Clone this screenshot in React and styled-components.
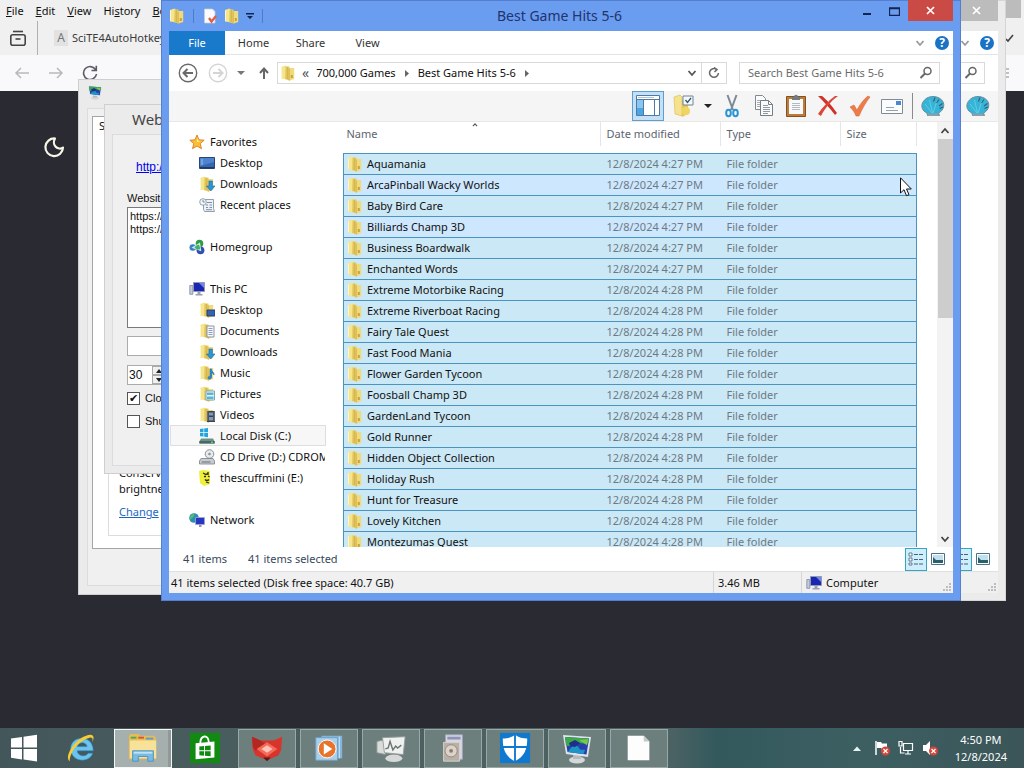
import React from 'react';
import styled, { createGlobalStyle, css } from 'styled-components';

const GlobalStyle = createGlobalStyle`
  * {
    box-sizing: border-box;
  }

  body {
    margin: 0;
    overflow: hidden;
    background: #2a2a32;
    color: #111;
    font-family: "Noto Sans", "Open Sans", sans-serif;
    font-size: 11px;
    line-height: 16px;
  }

  button {
    display: flex;
    align-items: center;
    justify-content: center;
    padding: 0;
    border: 0;
    background: none;
    color: inherit;
    font: inherit;
  }

  input, textarea {
    font: inherit;
    color: inherit;
  }

  svg {
    display: block;
    flex: none;
  }

  ul {
    margin: 0;
    padding: 0;
    list-style: none;
  }
`;

/* ---------- icons ---------- */

const FolderShape = () => (
  <>
    <path d="M1 2l4.500-1.500L7.500 2v12.500L1 13.500z" fill="#f5e58e" />
    <path d="M5.500 1.500h4v14L5 14z" fill="#e6ca62" />
    <path d="M9 3h5.200v11L9 15.700z" fill="#efda7c" />
    <path d="M7.300 2v12M9.200 3.500v12" stroke="#cda944" strokeWidth=".8" />
    <path d="M1.500 2.500v10.500" stroke="#fdf6c6" />
    <path d="M10.800 10h2v3h-2z" fill="#cf9f38" />
  </>
);

const overlays = {
  desktop: <path d="M8 8h8v6H8z" fill="#3763a8" stroke="#26416f" />,
  documents: (
    <>
      <path d="M8 3h7v11H8z" fill="#f6f8fc" stroke="#8b95a8" />
      <path d="M9.500 5.500h4M9.500 7.500h4M9.500 9.500h4M9.500 11.500h4" stroke="#7485b5" strokeWidth=".8" />
    </>
  ),
  downloads: <path d="M10 5h3.400v5H16l-4.300 5L7.500 10H10z" fill="#2b95d6" stroke="#1a6ba8" strokeWidth=".6" />,
  music: <path d="M11 4l1.500 0c0 3 3 3 2.500 6-.5-1.500-1.500-2-2.500-2v4.500c-.5 2.500-4 2-3.500 0 .3-1 1.200-1.300 2-1z" fill="#2a8cd0" stroke="#1c6fae" strokeWidth=".6" />,
  pictures: (
    <>
      <path d="M7 5h8.500v9H7z" fill="#e5f4fa" stroke="#79a9bd" />
      <path d="M8 6.500h6.500v2.500H8zM8 10.500h6.500V13H8z" fill="#5fb3cf" />
    </>
  ),
  videos: (
    <>
      <path d="M8 4h8v11H8z" fill="#39424f" />
      <path d="M10 5.500h4v3h-4zM10 10h4v3.500h-4z" fill="#7f9cc0" />
      <path d="M8.800 4.500v10M15.200 4.500v10" stroke="#e6e6e6" strokeWidth=".8" strokeDasharray="1 1" />
    </>
  ),
};

const FolderIcon = ({ kind }) => (
  <svg width="16" height="16" viewBox="0 0 16 16" aria-hidden="true">
    <FolderShape />
    {overlays[kind]}
  </svg>
);

const StarIcon = () => (
  <svg width="16" height="16" viewBox="0 0 16 16" aria-hidden="true">
    <path d="M8 1l2 4.800 5.200.4-4 3.400 1.300 5.100L8 12l-4.500 2.700 1.300-5.100-4-3.400L6 5.800z" fill="#fbc02d" stroke="#dd7a2a" strokeWidth=".9" />
    <path d="M8 3.500l1.200 3.200 3 .3-4 1z" fill="#fff3b8" />
  </svg>
);

const ScreenIcon = () => (
  <svg width="16" height="16" viewBox="0 0 16 16" aria-hidden="true">
    <path d="M.5 2.500h15v11H.5z" fill="#3568b4" stroke="#2a4676" />
    <path d="M1 3h14v4L1 11z" fill="#4f82cf" />
    <path d="M1 12h14v1.500H1z" fill="#22385e" />
    <path d="M2 5h2M2 7h2M2 9h2" stroke="#9fc0ee" />
  </svg>
);

const RecentIcon = () => (
  <svg width="16" height="16" viewBox="0 0 16 16" aria-hidden="true">
    <path d="M4.500 2.500h10v9l1 3h-10l-1-2z" fill="#eef1f5" stroke="#8794a3" strokeWidth=".9" />
    <path d="M8 5.500h5M7 8h2M10.500 8h2.500M7 10.500h2M10.500 10.500H13M7 12.700h6" stroke="#7f93a8" />
    <circle cx="4" cy="5" r="3.300" fill="#f3f6f9" stroke="#8a99a8" strokeWidth=".9" />
    <path d="M4 3v2h1.700" fill="none" stroke="#5d6f82" strokeWidth=".8" />
  </svg>
);

const HomegroupIcon = () => (
  <svg width="16" height="16" viewBox="0 0 16 16" aria-hidden="true">
    <circle cx="3.800" cy="8.500" r="3.300" fill="#3d7fc8" />
    <circle cx="10.500" cy="4.500" r="3.800" fill="#2f9b45" />
    <circle cx="11.500" cy="11.300" r="3.900" fill="#314fae" />
    <path d="M4 8.500l6.500-4 1 6.800z" fill="none" stroke="#d3eede" strokeWidth="1.300" />
    <circle cx="8.500" cy="8.500" r="2.200" fill="#3fb36a" />
  </svg>
);

const PcIcon = () => (
  <svg width="16" height="16" viewBox="0 0 16 16" aria-hidden="true">
    <path d="M.8 4.500h3v8.800h-3z" fill="#c4cbd9" stroke="#7f88a0" strokeWidth=".8" />
    <path d="M4.500 1.500h11v9h-11z" fill="#1a25b0" stroke="#9298b8" />
    <path d="M10 2h5v5z" fill="#6f86e8" />
    <path d="M8.500 11h3v2h2v1.500h-7V13h2z" fill="#9aa0b4" />
  </svg>
);

const DiskIcon = () => (
  <svg width="16" height="16" viewBox="0 0 16 16" aria-hidden="true">
    <path d="M1 1l3.500-.4v3.600H1zM5.200.5 9 0v4.200H5.200zM1 5h3.500v3.600L1 8.200zM5.200 5H9v4.200l-3.800-.5z" fill="#22a5de" />
    <path d="M2 10.500h12l1.600 3v2H.4v-2z" fill="#6d9187" />
    <path d="M.4 13h15.200v2.500H.4z" fill="#466a66" />
    <path d="M12 14.200h2" stroke="#7ef07a" />
  </svg>
);

const CdIcon = () => (
  <svg width="16" height="16" viewBox="0 0 16 16" aria-hidden="true">
    <circle cx="10.500" cy="5" r="4.300" fill="#e7eaed" stroke="#8c9298" />
    <circle cx="10.500" cy="5" r="1.300" fill="#8c9298" />
    <path d="M2 9.500h12l1.500 2.500v3H.5v-3z" fill="#c8ccd0" stroke="#7a8087" strokeWidth=".8" />
    <path d="M2.500 13h9" stroke="#666c73" />
  </svg>
);

const FaceIcon = () => (
  <svg width="16" height="16" viewBox="0 0 16 16" aria-hidden="true">
    <path d="M0 1l4-1 7 1v13l-6 2-4-3z" fill="#eef03c" />
    <path d="M4 3l3 1.500L9.500 3M5 6.500h2M9 6l1.500 1M6 9.500c2 2 3 1 4 0M9 2v3M7 12l3 1" fill="none" stroke="#2b2b12" strokeWidth="1.300" />
  </svg>
);

const NetworkIcon = () => (
  <svg width="16" height="16" viewBox="0 0 16 16" aria-hidden="true">
    <circle cx="5" cy="6" r="4.800" fill="#2b8fb3" />
    <path d="M2 3c3-2 4-1 3 1S2 6 2 8c-1.500-1.500-1.500-3.500 0-5zM6 8l3-2v4z" fill="#54bd6a" />
    <path d="M6.500 5.500h9v7h-9z" fill="#2735c4" stroke="#a0a8c8" strokeWidth=".8" />
    <path d="M10 13h2.500v2H10z" fill="#8d95ad" />
  </svg>
);

const CheckPageIcon = () => (
  <svg width="16" height="16" viewBox="0 0 16 16" aria-hidden="true">
    <path d="M2.500 1h8L13 3.500V15H2.500z" fill="#fbfbff" stroke="#c7cde0" strokeWidth=".7" />
    <path d="M7 10l2.500 3.500L14 8" fill="none" stroke="#e0603f" strokeWidth="2.300" />
  </svg>
);

const MonitorIcon = ({ size = 16 }) => (
  <svg width={size} height={size} viewBox="0 0 32 32" aria-hidden="true">
    <ellipse cx="16" cy="28" rx="8" ry="3.500" fill="#d4d8da" />
    <path d="M12 22h8v5h-8z" fill="#b5babd" />
    <path d="M2 3l28 2-3 20L5 22z" fill="#dfe4ec" />
    <path d="M4 5l24 1.600-2.500 16L6.500 20z" fill="#2a3fae" />
    <path d="M4 5l24 1.600-.8 5C20 12 17 9 12 12s-5 2-7.200 1z" fill="#3da848" />
    <path d="M9 17c3-5 8-4 9-1s5 1 6 2l-1.500 4L7 20z" fill="#1b95c4" />
    <path d="M8 11l6-3 5 3-5 4-5-1z" fill="#1d2f86" />
    <path d="M18 8l9-.7-1 6z" fill="#78c94c" />
  </svg>
);

const SearchIcon = () => (
  <svg width="14" height="14" viewBox="0 0 14 14" aria-hidden="true">
    <circle cx="8.500" cy="5" r="3.500" fill="none" stroke="#666" strokeWidth="1.500" />
    <path d="M6 7.500l-4.500 4.500" stroke="#666" strokeWidth="2" />
  </svg>
);

const Chevron = ({ color = '#555', up, size = 10 }) => (
  <svg width={size} height={size} viewBox="0 0 10 10" aria-hidden="true">
    <path d={up ? 'M1.500 7L5 3l3.500 4' : 'M1.500 3L5 7l3.500-4'} fill="none" stroke={color} strokeWidth="1.800" />
  </svg>
);

const Caret = ({ color = '#222' }) => (
  <svg width="8" height="4" viewBox="0 0 8 4" aria-hidden="true">
    <path d="M0 0h8L4 4z" fill={color} />
  </svg>
);

const RightArrow = () => (
  <svg width="4" height="7" viewBox="0 0 4 7" aria-hidden="true">
    <path d="M0 0l4 3.500L0 7z" fill="#666" />
  </svg>
);

const CircleArrow = ({ color, flip }) => (
  <svg width="20" height="20" viewBox="0 0 20 20" aria-hidden="true">
    <circle cx="10" cy="10" r="8.700" fill="none" stroke={color} strokeWidth="1.400" />
    <path d={flip ? 'M5 10h9M10.500 6l4 4-4 4' : 'M15 10H6M9.500 6l-4 4 4 4'} fill="none" stroke={color} strokeWidth="2" />
  </svg>
);

const CloseGlyph = () => (
  <svg width="9" height="9" viewBox="0 0 9 9" aria-hidden="true">
    <path d="M1 1l7 7M8 1L1 8" stroke="#fff" strokeWidth="1.700" />
  </svg>
);

const ShellIcon = () => (
  <svg width="24" height="24" viewBox="0 0 24 24" aria-hidden="true">
    <path d="M6 19C1 17 0 12 1.500 9 3.500 4.500 8 2.500 12 2.500s9 2 10.500 6.500c1 4-1 8-5 10l1 2.500h-12z" fill="#35b4d8" stroke="#6a8c9c" />
    <path d="M11 19L4 10M11.500 19L8.500 6M12 19l4-12" stroke="#62cbe4" strokeWidth="1" />
    <path d="M14 3.500l-1.500 4M18 5.500L15.500 9M21.500 9.500L18 12M22 13l-3.500 1.500" stroke="#3c5f74" strokeWidth="1.200" />
    <path d="M7 19.500h10l1 2.500H6z" fill="#86a0ac" />
  </svg>
);

const PaneIcon = () => (
  <svg width="26" height="24" viewBox="0 0 26 24" aria-hidden="true">
    <path d="M1.500 1.500h23v20h-23z" fill="#fff" stroke="#4d7ba6" />
    <path d="M1.500 5.500h23" stroke="#4d7ba6" />
    <path d="M2 6h6v15H2z" fill="#8cc6f0" />
    <path d="M2 14h6v7H2z" fill="#4ca4e2" />
    <path d="M8.500 6v15M19.500 6v15" stroke="#4d7ba6" />
    <path d="M3 3.500h16" stroke="#a9c6df" />
  </svg>
);

const SelectIcon = () => (
  <svg width="24" height="24" viewBox="0 0 24 24" aria-hidden="true">
    <path d="M2 3l6-2 2 2v19l-7-2z" fill="#f6e28c" stroke="#d6b850" strokeWidth=".6" />
    <path d="M10 6h6v14l-6 3z" fill="#e8c65a" />
    <path d="M11 2h10v9H11z" fill="#f4f8fb" stroke="#6e8494" />
    <path d="M13.500 6l2 2.500L19 4" fill="none" stroke="#31526c" strokeWidth="1.300" />
    <circle cx="14" cy="17" r="4" fill="#efd564" />
  </svg>
);

const CutIcon = () => (
  <svg width="24" height="24" viewBox="0 0 24 24" aria-hidden="true">
    <path d="M7.500 1l5.500 15M16.500 1L11 16" stroke="#7c8a96" strokeWidth="2" />
    <ellipse cx="8.500" cy="19" rx="2.300" ry="3.300" fill="none" stroke="#2695d2" strokeWidth="2" />
    <ellipse cx="15.500" cy="19" rx="2.300" ry="3.300" fill="none" stroke="#2695d2" strokeWidth="2" />
  </svg>
);

const CopyIcon = () => (
  <svg width="24" height="24" viewBox="0 0 24 24" aria-hidden="true">
    <path d="M3.500 1.500h7l3 3v11h-10z" fill="#fafbfc" stroke="#84898e" />
    <path d="M5 6.500h5M5 8.500h4M5 10.500h4M5 12.500h4" stroke="#a5abb1" />
    <path d="M8.500 6.500h8l4 4v11h-12z" fill="#fafbfc" stroke="#777d83" />
    <path d="M16.500 6.500v4h4" fill="none" stroke="#777d83" />
    <path d="M11 11.500h5M11 13.500h7M11 15.500h7M11 17.500h7M11 19.500h5" stroke="#9299a0" />
  </svg>
);

const PasteIcon = () => (
  <svg width="24" height="24" viewBox="0 0 24 24" aria-hidden="true">
    <path d="M2.500 2.500h19v20h-19z" fill="#bd7c3c" stroke="#84511f" />
    <path d="M5 5h14v15H5z" fill="#f8f9fa" />
    <path d="M8 9.500h8M8 11.500h8M8 13.500h8M8 15.500h8" stroke="#b1b9c1" />
    <path d="M8 3h2c0-3 4-3 4 0h2v3H8z" fill="#717b82" />
  </svg>
);

const DeleteIcon = () => (
  <svg width="24" height="24" viewBox="0 0 24 24" aria-hidden="true">
    <path d="M2 2l4 0c4 3 10 10 15 17l-2 2C14 14 8 8 2 2z" fill="#cf3327" />
    <path d="M22 2l-3 0C12 7 6 14 2 20l3 2C9 14 15 7 22 2z" fill="#dd4437" />
  </svg>
);

const AcceptIcon = () => (
  <svg width="24" height="24" viewBox="0 0 24 24" aria-hidden="true">
    <path d="M2 13l4-2 3 5c3-6 7-11 11-14l2 1C18 8 14 15 11 22H8C7 19 5 16 2 13z" fill="#ee7c4b" stroke="#d96a3a" strokeWidth=".6" />
  </svg>
);

const PropertiesIcon = () => (
  <svg width="24" height="24" viewBox="0 0 24 24" aria-hidden="true">
    <path d="M1.500 5.500h21v14h-21z" fill="#fbfcfd" stroke="#818b94" />
    <path d="M16 7h5v4h-5z" fill="#4a86d2" />
    <path d="M6 13.500h8M6 16.500h12" stroke="#98a0a8" />
  </svg>
);

/* ---------- browser behind everything ---------- */

const Desktop = styled.div`
  position: relative;
  display: flex;
  flex-direction: column;
  height: 100vh;
  overflow: hidden;
`;

const Browser = styled.section`
  display: flex;
  flex: 1;
  flex-direction: column;
  min-height: 0;
`;

const MenuBar = styled.nav`
  display: flex;
  align-items: center;
  gap: 12px;
  height: 21px;
  padding-left: 6px;
  background: #f0f0f0;
`;

const MenuItem = styled.button`
  white-space: pre;
`;

const TabStrip = styled.div`
  display: flex;
  align-items: center;
  height: 34px;
  padding-left: 9px;
  background: #f0f0f0;
`;

const BrowserTab = styled.button`
  gap: 4px;
  height: 100%;
  margin-left: 10px;
  padding-left: 16px;
  border-left: 1px solid #b0b0b0;
  color: #3a3a3a;
`;

const TabBadge = styled.span`
  width: 14px;
  height: 16px;
  background: #e2e2e2;
  color: #777;
  font-size: 12px;
`;

const BrowserNav = styled.div`
  display: flex;
  align-items: center;
  gap: 18px;
  height: 36px;
  padding-left: 14px;
  background: #f9f9fb;
`;

const Page = styled.main`
  flex: 1;
  padding: 45px 43px;
  background: #2a2a32;
`;

const BrowserEdge = styled.div`
  position: absolute;
  top: 0;
  right: 0;
  display: flex;
  flex-direction: column;
  gap: 14px;
  width: 18px;
  padding-right: 3px;
`;

const EdgeBlock = styled.div`
  height: 18px;
  background: #bcbcbc;
`;

const Underlined = ({ text, at = 0 }) => (
  <span>
    {text.slice(0, at)}
    <u>{text[at]}</u>
    {text.slice(at + 1)}
  </span>
);

const BrowserWindow = () => (
  <Browser>
    <MenuBar aria-label="Browser menu">
      <MenuItem><Underlined text="File" /></MenuItem>
      <MenuItem><Underlined text="Edit" /></MenuItem>
      <MenuItem><Underlined text="View" /></MenuItem>
      <MenuItem><Underlined text="History" at={2} /></MenuItem>
      <MenuItem><Underlined text="Bookmarks" /></MenuItem>
    </MenuBar>
    <TabStrip>
      <button aria-label="Recent browsing">
        <svg width="18" height="18" viewBox="0 0 18 18">
          <path d="M4 2.500h10" stroke="#444" strokeWidth="1.600" />
          <rect x="1.800" y="5.800" width="14.400" height="10.400" rx="2" fill="none" stroke="#444" strokeWidth="1.600" />
          <path d="M6.500 10h5" stroke="#444" strokeWidth="1.600" />
        </svg>
      </button>
      <BrowserTab>
        <TabBadge>A</TabBadge>
        SciTE4AutoHotkey
      </BrowserTab>
    </TabStrip>
    <BrowserNav>
      <button aria-label="Back">
        <svg width="16" height="14" viewBox="0 0 16 14">
          <path d="M15 7H2M7 2L2 7l5 5" fill="none" stroke="#b9b9bd" strokeWidth="1.500" />
        </svg>
      </button>
      <button aria-label="Forward">
        <svg width="16" height="14" viewBox="0 0 16 14">
          <path d="M1 7h13M9 2l5 5-5 5" fill="none" stroke="#b9b9bd" strokeWidth="1.500" />
        </svg>
      </button>
      <button aria-label="Reload">
        <svg width="16" height="16" viewBox="0 0 16 16">
          <path d="M13.500 4.500A6.500 6.500 0 1 0 14.500 9M14.300.8v4.700H9.500" fill="none" stroke="#5b5b66" strokeWidth="1.600" />
        </svg>
      </button>
    </BrowserNav>
    <Page>
      <svg width="22" height="22" viewBox="0 0 22 22" aria-hidden="true">
        <path d="M12 2.500A8.800 8.800 0 1 0 20 11.500C18 13.500 14 12.500 12.500 10.500 10.500 8.500 10.500 5 12 2.500z" fill="none" stroke="#f7f7e8" strokeWidth="2.200" strokeLinejoin="round" />
      </svg>
    </Page>
    <BrowserEdge>
      <EdgeBlock />
      <svg width="15" height="48" viewBox="0 0 15 48" aria-hidden="true">
        <path d="M0 7l2 2 5-6" fill="none" stroke="#444" strokeWidth="1.600" />
        <path d="M0 37h3M0 41h3M0 45h3" stroke="#888" />
      </svg>
    </BrowserEdge>
  </Browser>
);

/* ---------- power settings window ---------- */

const PowerWindow = styled.section`
  position: absolute;
  top: 79px;
  right: 200px;
  bottom: 173px;
  left: 78px;
  display: flex;
  flex-direction: column;
  padding: 4px 6px 8px 8px;
  border: 1px solid #cfcfcf;
  background: #ebebeb;
`;

const PowerBody = styled.div`
  display: flex;
  flex: 1;
  margin-top: 8px;
  padding: 7px 6px 36px 4px;
  border: 1px solid #dcdcdc;
  background: #f0f0f0;
`;

const PowerPage = styled.div`
  display: flex;
  flex: 1;
  flex-direction: column;
  padding: 1px 6px 12px;
  border: 1px solid #a5a5a5;
  background: #fff;
`;

const PowerGroup = styled.div`
  display: flex;
  flex: 1;
  flex-direction: column;
  justify-content: flex-end;
  margin-left: 9px;
  padding: 0 10px 15px;
  border: 1px solid #dcdcdc;
  border-top: 0;
`;

const TextLink = styled.a`
  color: ${(p) => p.$color || '#1b67c1'};
`;

const PowerLink = styled(TextLink)`
  margin-top: 7px;
`;

const PowerOptions = () => (
  <PowerWindow>
    <MonitorIcon size={16} />
    <PowerBody>
      <PowerPage>
        <span>Set</span>
        <PowerGroup>
          <span>Conserve</span>
          <span>brightness</span>
          <PowerLink href="#power">Change</PowerLink>
        </PowerGroup>
      </PowerPage>
    </PowerBody>
  </PowerWindow>
);

/* ---------- website dialog ---------- */

const DialogWindow = styled.section`
  position: absolute;
  top: 104px;
  right: 300px;
  bottom: 294px;
  left: 104px;
  display: flex;
  flex-direction: column;
  padding: 0 7px 7px;
  border: 1px solid #cfcfcf;
  background: #ebebeb;
`;

const DialogTitle = styled.h2`
  margin: 0;
  padding-left: 20px;
  font-size: 15px;
  font-weight: 400;
  line-height: 29px;
  color: #444;
`;

const DialogBody = styled.form`
  display: flex;
  flex: 1;
  flex-direction: column;
  align-items: flex-start;
  padding: 26px 14px 0;
  border: 1px solid #dcdcdc;
  background: #f0f0f0;
  font-family: "Liberation Sans", Arial, sans-serif;
  font-size: 12px;
  line-height: 13px;
`;

const DialogLink = styled(TextLink)`
  margin-left: 9px;
`;

const FieldLabel = styled.label`
  margin: 18px 0 2px;
  font-size: 11px;
`;

const UrlBox = styled.textarea`
  width: 200px;
  height: 121px;
  padding: 2px;
  border: 1px solid #7a7a7a;
  background: #fff;
  font-size: 11px;
  resize: none;
`;

const PlainInput = styled.input`
  width: 200px;
  height: 20px;
  margin: 8px 0 9px;
  border: 1px solid #ababab;
  background: #fff;
`;

const SpinRow = styled.div`
  display: flex;
  height: 20px;
  border: 1px solid #ababab;
  background: #fff;
`;

const SpinInput = styled.input`
  width: 24px;
  padding: 0 1px;
  border: 0;
`;

const SpinButtons = styled.div`
  display: flex;
  flex-direction: column;
  width: 14px;
`;

const SpinButton = styled.button`
  flex: 1;
  border: 1px solid #ababab;
  background: #f0f0f0;
`;

const CheckRow = styled.label`
  display: flex;
  align-items: center;
  gap: 5px;
  height: 13px;
  margin-top: ${(p) => p.$gap}px;
  font-size: 11px;
`;

const CheckBox = styled.input`
  appearance: none;
  flex: none;
  width: 13px;
  height: 13px;
  margin: 0;
  border: 1px solid #555;
  background: #fff;

  &:checked::before {
    content: "✔";
    display: block;
    font-size: 11px;
    line-height: 11px;
    text-align: center;
    color: #111;
  }
`;

const WebsiteDialog = () => (
  <DialogWindow>
    <DialogTitle>Website</DialogTitle>
    <DialogBody>
      <DialogLink href="#site" $color="#0000ee">http://</DialogLink>
      <FieldLabel htmlFor="sites">Website</FieldLabel>
      <UrlBox id="sites" defaultValue={'https://\nhttps://'} />
      <PlainInput aria-label="Address" />
      <SpinRow>
        <SpinInput aria-label="Seconds" defaultValue="30" />
        <SpinButtons>
          <SpinButton type="button" aria-label="More">
            <svg width="6" height="4" viewBox="0 0 6 4"><path d="M0 4l3-4 3 4z" fill="#222" /></svg>
          </SpinButton>
          <SpinButton type="button" aria-label="Less">
            <svg width="6" height="4" viewBox="0 0 6 4"><path d="M0 0l3 4 3-4z" fill="#222" /></svg>
          </SpinButton>
        </SpinButtons>
      </SpinRow>
      <CheckRow $gap={7}>
        <CheckBox type="checkbox" defaultChecked />
        Close
      </CheckRow>
      <CheckRow $gap={10}>
        <CheckBox type="checkbox" />
        Shutdown
      </CheckRow>
    </DialogBody>
  </DialogWindow>
);

/* ---------- explorer ---------- */

const Frame = styled.section`
  position: absolute;
  top: 0;
  right: ${(p) => (p.$inactive ? 18 : 63)}px;
  bottom: 167px;
  left: ${(p) => (p.$inactive ? 206 : 161)}px;
  display: flex;
  flex-direction: column;
  padding: 0 8px 8px;
  background: ${(p) => (p.$inactive ? '#ebebeb' : '#6a9cf0')};
  box-shadow: inset 0 0 0 1px ${(p) => (p.$inactive ? '#d5d5d5' : '#5580d0')};
`;

const TitleBar = styled.header`
  display: flex;
  height: 31px;
`;

const QuickAccess = styled.div`
  display: flex;
  align-items: center;
  height: 31px;
  gap: 6px;
`;

const Divider = styled.span`
  width: 1px;
  height: ${(p) => p.$height || 14}px;
  margin: 0 ${(p) => p.$space || 2}px;
  background: ${(p) => p.$color || '#4f7bc9'};
`;

const WindowTitle = styled.h1`
  flex: 1;
  margin: 0;
  font-size: 14px;
  font-weight: 400;
  line-height: 31px;
  text-align: center;
  color: #20346e;
`;

const Controls = styled.div`
  display: flex;
  margin-left: auto;
`;

const ControlButton = styled.button`
  width: 27px;
  height: 22px;
`;

const CloseButton = styled.button`
  width: ${(p) => (p.$inactive ? 43 : 45)}px;
  height: 21px;
  background: ${(p) => (p.$inactive ? '#bcbcbc' : '#ca4a45')};
`;

const RibbonTabs = styled.div`
  display: flex;
  align-items: center;
  height: 24px;
  padding-right: 4px;
  border-bottom: 1px solid #e2e4e6;
  background: #fff;
`;

const RibbonTab = styled.button`
  height: 24px;
  width: 57px;
  color: #333;

  ${(p) => p.$file && css`
    width: 56px;
    background: #1979ca;
    color: #fff;
  `}
`;

const RibbonTools = styled.div`
  display: flex;
  align-items: center;
  gap: 10px;
  margin-left: auto;
`;

const HelpBadge = styled.button`
  width: 14px;
  height: 14px;
  border-radius: 50%;
  background: #1a72c4;
  color: #fff;
  font-size: 12px;
  font-weight: 700;
  line-height: 14px;
`;

const NavRow = styled.div`
  display: flex;
  align-items: center;
  height: 36px;
  padding: 0 13px 0 9px;
  background: #fff;
`;

const NavButton = styled.button`
  margin-right: ${(p) => p.$space}px;
`;

const AddressBar = styled.div`
  display: flex;
  flex: 1;
  align-items: center;
  gap: 9px;
  height: 22px;
  margin-right: 12px;
  padding-left: 2px;
  border: 1px solid #d9d9d9;
`;

const Chevrons = styled.span`
  margin: 0 -2px 0 -3px;
  color: #555;
  font-size: 14px;
`;

const RefreshButton = styled.button`
  width: 25px;
  height: 20px;
  border-left: 1px solid #d9d9d9;
`;

const AddressEnd = styled.div`
  display: flex;
  align-items: center;
  gap: 4px;
  margin-left: auto;
`;

const SearchBox = styled.label`
  display: flex;
  align-items: center;
  width: 201px;
  height: 22px;
  margin-left: auto;
  padding: 0 6px 0 8px;
  border: 1px solid #d9d9d9;
  background: #fff;
`;

const SearchInput = styled.input`
  flex: 1;
  min-width: 0;
  padding: 0;
  border: 0;
  outline: 0;

  &::placeholder {
    color: #6b6b6b;
  }
`;

const Toolbar = styled.div`
  display: flex;
  align-items: center;
  justify-content: flex-end;
  height: 30px;
  padding-right: 4px;
  background: #f5f5f5;
`;

const ToolButton = styled.button`
  width: 32px;
  height: 30px;
  ${(p) => p.$active && css`
    margin-right: 4px;
    border: 1px solid #5c9ed6;
    background: #c5dff5;
  `}
`;

const ToolCaret = styled(ToolButton)`
  width: 16px;
`;

const Content = styled.div`
  display: flex;
  flex: 1;
  min-height: 0;
  border-top: 1px solid #e8e8e8;
  background: #fff;
`;

const NavPane = styled.nav`
  flex: none;
  width: 158px;
  padding: 9px 1px 0;
  overflow: hidden;
`;

const TreeItem = styled.a`
  display: flex;
  align-items: center;
  gap: 5px;
  height: 21px;
  margin-bottom: ${(p) => (p.$last ? 21 : 0)}px;
  padding-left: ${(p) => (p.$root ? 18 : 28)}px;
  overflow: hidden;
  border: 1px solid ${(p) => (p.$hot ? '#dedede' : 'transparent')};
  background: ${(p) => (p.$hot ? '#f7f7f7' : 'none')};
  color: #111;
  text-decoration: none;
  white-space: nowrap;
`;

const ListPane = styled.div`
  flex: 1;
  min-width: 0;
  padding-left: 16px;
  overflow: hidden;
`;

const FileTable = styled.table`
  width: calc(100% - 20px);
  border-collapse: collapse;
  table-layout: fixed;
`;

const HeadCell = styled.th`
  position: relative;
  width: ${(p) => p.$width};
  height: 31px;
  padding: 0 0 6px ${(p) => (p.$first ? 3 : 6)}px;
  background: linear-gradient(#e5e5e5, #e5e5e5) right top / 1px 24px no-repeat;
  color: #5d6470;
  font-weight: 400;
  text-align: left;
`;

const SortMark = styled.span`
  position: absolute;
  top: 0;
  left: 50%;
`;

const FileRow = styled.tr`
  border: 1px solid #4b94c0;
  background: ${(p) => (p.$cool ? '#cde7fe' : '#cbe8f6')};
`;

const FileCell = styled.td`
  height: 21px;
  padding: 0 0 0 6px;
  color: #6d7a85;
  white-space: nowrap;
`;

const NameCell = styled(FileCell)`
  padding-left: 3px;
  color: #111;
`;

const NameInner = styled.span`
  display: flex;
  align-items: center;
  gap: 4px;
`;

const ScrollTrack = styled.div`
  display: flex;
  flex-direction: column;
  align-items: center;
  justify-content: space-between;
  width: 16px;
  background: #f3f3f3;
`;

const ScrollButton = styled.button`
  width: 16px;
  height: 17px;
`;

const ScrollThumb = styled.div`
  width: 15px;
  height: 42%;
  margin-bottom: auto;
  background: #cdcdcd;
`;

const DetailsBar = styled.div`
  display: flex;
  align-items: center;
  gap: 21px;
  height: 24px;
  padding: 0 8px 0 14px;
  background: #fff;
  color: #37475c;
`;

const ViewButtons = styled.div`
  display: flex;
  align-items: center;
  gap: 4px;
  margin-left: auto;
`;

const ViewButton = styled.button`
  height: 23px;
  ${(p) => p.$active && css`
    width: 22px;
    border: 1px solid #37a5c2;
    background: #cdeefa;
  `}
`;

const StatusBar = styled.footer`
  display: grid;
  grid-template-columns: 1fr 88px 152px;
  height: 22px;
  border-top: 1px solid #e0e0e0;
  background: #f0f0f0;
`;

const StatusCell = styled.div`
  display: flex;
  align-items: center;
  gap: 4px;
  padding-left: ${(p) => (p.$first ? 2 : 4)}px;
  border-left: ${(p) => (p.$first ? 0 : 1)}px solid #d5d5d5;
`;

const GripBox = styled.span`
  align-self: flex-end;
  grid-column: 3;
  margin-left: auto;
`;

const Grip = () => (
  <GripBox>
    <svg width="12" height="12" viewBox="0 0 12 12" aria-hidden="true">
      <path d="M8 2h2v2H8zM8 5h2v2H8zM5 5h2v2H5zM8 8h2v2H8zM5 8h2v2H5zM2 8h2v2H2z" fill="#bdbdbd" />
    </svg>
  </GripBox>
);

const RibbonEnd = () => (
  <RibbonTools>
    <button aria-label="Expand ribbon"><Chevron color="#999" /></button>
    <HelpBadge aria-label="Help">?</HelpBadge>
  </RibbonTools>
);

const ViewSwitch = () => (
  <ViewButtons>
    <ViewButton $active aria-label="Details view">
      <svg width="16" height="14" viewBox="0 0 16 14">
        <path d="M1 1h3v3H1zM1 6h3v3H1zM1 11h3v2H1z" fill="#fff" stroke="#46617a" strokeWidth=".8" />
        <path d="M6 2.500h4M11 2.500h4M6 7.500h4M11 7.500h4M6 12h4M11 12h4" stroke="#46617a" />
      </svg>
    </ViewButton>
    <ViewButton aria-label="Thumbnail view">
      <svg width="14" height="12" viewBox="0 0 14 12">
        <path d="M.5.5h13v11H.5z" fill="#fff" stroke="#4b7186" />
        <path d="M2 2h10v8H2z" fill="#bfe0ee" />
        <path d="M2 4l3 3h7v3H2z" fill="#2a5f6c" />
      </svg>
    </ViewButton>
  </ViewButtons>
);

const tree = [
  { label: 'Favorites', icon: <StarIcon />, root: true },
  { label: 'Desktop', icon: <ScreenIcon /> },
  { label: 'Downloads', icon: <FolderIcon kind="downloads" /> },
  { label: 'Recent places', icon: <RecentIcon />, last: true },
  { label: 'Homegroup', icon: <HomegroupIcon />, root: true, last: true },
  { label: 'This PC', icon: <PcIcon />, root: true },
  { label: 'Desktop', icon: <FolderIcon kind="desktop" /> },
  { label: 'Documents', icon: <FolderIcon kind="documents" /> },
  { label: 'Downloads', icon: <FolderIcon kind="downloads" /> },
  { label: 'Music', icon: <FolderIcon kind="music" /> },
  { label: 'Pictures', icon: <FolderIcon kind="pictures" /> },
  { label: 'Videos', icon: <FolderIcon kind="videos" /> },
  { label: 'Local Disk (C:)', icon: <DiskIcon />, hot: true },
  { label: 'CD Drive (D:) CDROM', icon: <CdIcon /> },
  { label: 'thescuffmini (E:)', icon: <FaceIcon />, last: true },
  { label: 'Network', icon: <NetworkIcon />, root: true },
];

const files = [
  ['Aquamania', '4:27'],
  ['ArcaPinball Wacky Worlds', '4:27', true],
  ['Baby Bird Care', '4:27'],
  ['Billiards Champ 3D', '4:27', true],
  ['Business Boardwalk', '4:27'],
  ['Enchanted Words', '4:27'],
  ['Extreme Motorbike Racing', '4:28'],
  ['Extreme Riverboat Racing', '4:28'],
  ['Fairy Tale Quest', '4:28'],
  ['Fast Food Mania', '4:28'],
  ['Flower Garden Tycoon', '4:28'],
  ['Foosball Champ 3D', '4:28'],
  ['GardenLand Tycoon', '4:28'],
  ['Gold Runner', '4:28'],
  ['Hidden Object Collection', '4:28'],
  ['Holiday Rush', '4:28'],
  ['Hunt for Treasure', '4:28'],
  ['Lovely Kitchen', '4:28'],
  ['Montezumas Quest', '4:28'],
];

const FileList = () => (
  <ListPane>
    <FileTable>
      <thead>
        <tr>
          <HeadCell $first $width="auto">
            Name
            <SortMark><Chevron up size={6} /></SortMark>
          </HeadCell>
          <HeadCell $width="120px">Date modified</HeadCell>
          <HeadCell $width="120px">Type</HeadCell>
          <HeadCell $width="76px">Size</HeadCell>
        </tr>
      </thead>
      <tbody>
        {files.map(([name, time, cool]) => (
          <FileRow key={name} $cool={cool}>
            <NameCell>
              <NameInner><FolderIcon />{name}</NameInner>
            </NameCell>
            <FileCell>12/8/2024 {time} PM</FileCell>
            <FileCell>File folder</FileCell>
            <FileCell />
          </FileRow>
        ))}
      </tbody>
    </FileTable>
  </ListPane>
);

const Explorer = () => (
  <Frame>
    <TitleBar>
      <QuickAccess>
        <FolderIcon />
        <Divider />
        <button aria-label="Properties"><CheckPageIcon /></button>
        <button aria-label="New folder"><FolderIcon /></button>
        <button aria-label="Customize">
          <svg width="8" height="8" viewBox="0 0 8 8"><path d="M0 1h8v1.500H0zM1 4h6L4 7z" fill="#14244e" /></svg>
        </button>
        <Divider />
      </QuickAccess>
      <WindowTitle>Best Game Hits 5-6</WindowTitle>
      <Controls>
        <ControlButton aria-label="Minimize">
          <svg width="9" height="9" viewBox="0 0 9 9"><path d="M0 6h8v2H0z" fill="#14244e" /></svg>
        </ControlButton>
        <ControlButton aria-label="Maximize">
          <svg width="11" height="9" viewBox="0 0 11 9"><path d="M.5 1.500h10v7H.5zM0 1h11" fill="none" stroke="#14244e" strokeWidth="1.300" /></svg>
        </ControlButton>
        <CloseButton aria-label="Close"><CloseGlyph /></CloseButton>
      </Controls>
    </TitleBar>
    <RibbonTabs>
      <RibbonTab $file>File</RibbonTab>
      <RibbonTab>Home</RibbonTab>
      <RibbonTab>Share</RibbonTab>
      <RibbonTab>View</RibbonTab>
      <RibbonEnd />
    </RibbonTabs>
    <NavRow>
      <NavButton $space={10} aria-label="Back"><CircleArrow color="#6a6a6a" /></NavButton>
      <NavButton $space={9} aria-label="Forward"><CircleArrow color="#d5d5d5" flip /></NavButton>
      <NavButton $space={13} aria-label="Recent locations"><Caret color="#777" /></NavButton>
      <NavButton $space={7} aria-label="Up">
        <svg width="12" height="12" viewBox="0 0 12 12"><path d="M6 12V2M2 6l4-4.500L10 6" fill="none" stroke="#666" strokeWidth="2" /></svg>
      </NavButton>
      <AddressBar>
        <FolderIcon />
        <Chevrons>«</Chevrons>
        <button>700,000 Games</button>
        <RightArrow />
        <button>Best Game Hits 5-6</button>
        <RightArrow />
        <AddressEnd>
          <button aria-label="Previous locations"><Chevron /></button>
          <RefreshButton aria-label="Refresh">
            <svg width="12" height="12" viewBox="0 0 12 12">
              <path d="M8.500 2.300A4.400 4.400 0 1 0 10.400 6M6 .5l3 2-2.500 2.500" fill="none" stroke="#666" strokeWidth="1.500" />
            </svg>
          </RefreshButton>
        </AddressEnd>
      </AddressBar>
      <SearchBox>
        <SearchInput aria-label="Search" placeholder="Search Best Game Hits 5-6" />
        <SearchIcon />
      </SearchBox>
    </NavRow>
    <Toolbar>
      <ToolButton $active aria-label="Navigation pane"><PaneIcon /></ToolButton>
      <ToolButton aria-label="Select"><SelectIcon /></ToolButton>
      <ToolCaret aria-label="More selections"><Caret /></ToolCaret>
      <ToolButton aria-label="Cut"><CutIcon /></ToolButton>
      <ToolButton aria-label="Copy"><CopyIcon /></ToolButton>
      <ToolButton aria-label="Paste"><PasteIcon /></ToolButton>
      <ToolButton aria-label="Delete"><DeleteIcon /></ToolButton>
      <ToolButton aria-label="Rename"><AcceptIcon /></ToolButton>
      <ToolButton aria-label="Item properties"><PropertiesIcon /></ToolButton>
      <Divider $color="#8a8a8a" $space={4} $height={26} />
      <ToolButton aria-label="Classic Shell"><ShellIcon /></ToolButton>
    </Toolbar>
    <Content>
      <NavPane aria-label="Folders">
        <ul>
          {tree.map((item, i) => (
            <li key={i}>
              <TreeItem href="#folder" $root={item.root} $last={item.last} $hot={item.hot}>
                {item.icon}
                {item.label}
              </TreeItem>
            </li>
          ))}
        </ul>
      </NavPane>
      <FileList />
      <ScrollTrack>
        <ScrollButton aria-label="Scroll up"><Chevron up color="#444" /></ScrollButton>
        <ScrollThumb />
        <ScrollButton aria-label="Scroll down"><Chevron color="#444" /></ScrollButton>
      </ScrollTrack>
    </Content>
    <DetailsBar>
      <span>41 items</span>
      <span>41 items selected</span>
      <ViewSwitch />
    </DetailsBar>
    <StatusBar>
      <StatusCell $first>41 items selected (Disk free space: 40.7 GB)</StatusCell>
      <StatusCell>3.46 MB</StatusCell>
      <StatusCell>
        <PcIcon />
        Computer
        <Grip />
      </StatusCell>
    </StatusBar>
  </Frame>
);

const InactiveExplorer = () => (
  <Frame $inactive>
    <TitleBar>
      <Controls>
        <CloseButton $inactive aria-label="Close"><CloseGlyph /></CloseButton>
      </Controls>
    </TitleBar>
    <RibbonTabs><RibbonEnd /></RibbonTabs>
    <NavRow>
      <SearchBox>
        <SearchInput aria-label="Search" />
        <SearchIcon />
      </SearchBox>
    </NavRow>
    <Toolbar>
      <ToolButton aria-label="Classic Shell"><ShellIcon /></ToolButton>
    </Toolbar>
    <Content />
    <DetailsBar><ViewSwitch /></DetailsBar>
    <StatusBar><Grip /></StatusBar>
  </Frame>
);

/* ---------- taskbar ---------- */

const Bar = styled.footer`
  display: flex;
  align-items: center;
  gap: 4px;
  height: 40px;
  background: linear-gradient(90deg, #43575b, #4b5f60 30%, #4e6364 65%, #33595d 70%, #3d5f62 85%, #3b5558);
  color: #fff;
`;

const TaskButton = styled.button`
  width: ${(p) => (p.$start ? 48 : 58)}px;
  height: 39px;
  ${(p) => p.$open && css`
    border: 1px solid #9aa9a6;
    background: #6c7f7c;
  `}
  ${(p) => p.$active && css`
    border: 1px solid #f4f7f6;
    background: #a5afad;
    box-shadow: inset -3px 0 0 #8d9a98;
  `}
`;

const Tray = styled.div`
  display: flex;
  align-items: center;
  gap: 8px;
  margin-left: auto;
  padding-right: 17px;
`;

const TrayArrow = styled.button`
  margin-right: 5px;
`;

const Clock = styled.button`
  flex-direction: column;
  gap: 1px;
  margin-left: 9px;
`;

const TaskIcon = ({ children }) => (
  <svg width="32" height="32" viewBox="0 0 34 34" aria-hidden="true">{children}</svg>
);

const RedX = () => (
  <>
    <circle cx="11.500" cy="11" r="4.500" fill="#d8453a" />
    <path d="M9.500 9l4 4M13.500 9l-4 4" stroke="#fff" strokeWidth="1.300" />
  </>
);

const Taskbar = () => (
  <Bar>
    <TaskButton $start aria-label="Start">
      <svg width="28" height="28" viewBox="0 0 28 28">
        <path d="M1 4.500l11-1.600v10.500H1zM13.500 2.700L27 .8v12.600H13.500zM1 14.900h11v10.500L1 23.800zM13.500 14.900H27v12.500l-13.500-1.900z" fill="#fff" />
      </svg>
    </TaskButton>
    <TaskButton aria-label="Internet Explorer">
      <TaskIcon>
        <path d="M30 20H13c.5 6 9 7 11.500 2.500h5C26 33 7 33 6 18 6 3 30 2 30 20zM13 15.500h10.500c-1-5.500-9-5.500-10.500 0z" fill="#6cc4ee" stroke="#2688c4" strokeWidth=".6" fillRule="evenodd" />
        <path d="M5 31C-2 27 12 4 27 3c4 0 4 4 2 8 1-4 0-5.500-3-5C14 9 5 22 5 31z" fill="#f7cd33" />
      </TaskIcon>
    </TaskButton>
    <TaskButton $active aria-label="File Explorer">
      <TaskIcon>
        <path d="M2 4l2-2h8l2 2h15l2 3v22H2z" fill="#e5bd52" />
        <path d="M3 9h28v19H3z" fill="#f8e29a" />
        <path d="M4 5h6v2H4z" fill="#4aa860" />
        <path d="M12 5h6v2h-6z" fill="#d45245" />
        <path d="M20 6h8v2h-8z" fill="#5a9bd8" />
        <path d="M6 20h22v11h-6v-5h-10v5H6z" fill="#79bbe2" stroke="#4c91c2" />
        <path d="M7 22h20" stroke="#bfe3f6" strokeWidth="2" />
      </TaskIcon>
    </TaskButton>
    <TaskButton aria-label="Store">
      <TaskIcon>
        <path d="M1 1h32v32H1z" fill="#118a11" />
        <path d="M7 12l20-2v17l-20 2z" fill="#fff" />
        <path d="M12 12c0-9 9-10 9-1" fill="none" stroke="#fff" strokeWidth="2" />
        <path d="M11 15.500l5-.5v4.500h-5zM17 15l6-.6v5h-6zM11 20.500h5v4.700l-5-.4zM17 20.500h6v5.300l-6-.6z" fill="#118a11" />
      </TaskIcon>
    </TaskButton>
    <TaskButton $open aria-label="Fox">
      <TaskIcon>
        <path d="M1 5l9 4h14l9-4-1 14-3 6-12 5-12-5-3-6z" fill="#d8342c" />
        <path d="M1 5l9 4 7 5-12 6-3-4z" fill="#b32622" />
        <path d="M17 11l11 7-11 8-11-8z" fill="#f26a58" />
        <path d="M17 14l6 4-6 4-6-4z" fill="#ffc4b8" />
        <path d="M13 27h8l-4 4z" fill="#5a1a16" />
      </TaskIcon>
    </TaskButton>
    <TaskButton $open aria-label="Media Player">
      <TaskIcon>
        <path d="M9 4h22v24H9z" fill="#83b6dc" />
        <path d="M28 5v23" stroke="#d2e6f5" />
        <path d="M3 6h23v24H3z" fill="#aacfe9" stroke="#6ba1cb" />
        <circle cx="15" cy="18" r="9.500" fill="#e8742c" stroke="#fff" />
        <path d="M11.500 12l9 6-9 6z" fill="#fff" />
      </TaskIcon>
    </TaskButton>
    <TaskButton $open aria-label="Task Manager">
      <TaskIcon>
        <ellipse cx="20" cy="28" rx="9" ry="4" fill="#d7d9d9" />
        <path d="M2 10l9-2v16l-9-2z" fill="#d9dcdb" stroke="#8d9492" />
        <path d="M8 6l24-1-2 19-20-2z" fill="#eff1f0" stroke="#969d9b" />
        <path d="M11 18l3-1 2-7 3 9 3-4 2 2 4-3" fill="none" stroke="#6a7471" strokeWidth="1.500" />
      </TaskIcon>
    </TaskButton>
    <TaskButton $open aria-label="Installer">
      <TaskIcon>
        <path d="M9 3h18v26H9z" fill="#d6d7e4" stroke="#a2a4ba" />
        <path d="M11 5h14v3H11z" fill="#8f93b5" />
        <path d="M7 11h17v20H7z" fill="#b8b0a6" stroke="#d8d4ce" />
        <circle cx="15" cy="20" r="6.500" fill="#d9d3ca" stroke="#96877a" />
        <circle cx="15" cy="20" r="2" fill="#8d7a6a" />
      </TaskIcon>
    </TaskButton>
    <TaskButton $open aria-label="Defender">
      <TaskIcon>
        <path d="M1 1h32v32H1z" fill="#0f78d0" />
        <path d="M17 3c4 3 8 4 13 4 0 12-3 19-13 24C7 26 4 19 4 7c5 0 9-1 13-4z" fill="#fff" />
        <path d="M17 3v28M4 16h26" stroke="#0f78d0" strokeWidth="2" />
      </TaskIcon>
    </TaskButton>
    <TaskButton $open aria-label="Display"><MonitorIcon size={32} /></TaskButton>
    <TaskButton $open aria-label="Document">
      <TaskIcon>
        <path d="M5 4h17l6 6v20H5z" fill="#fdfdfd" />
        <path d="M22 4v6h6z" fill="#c4c9c8" />
      </TaskIcon>
    </TaskButton>
    <Tray>
      <TrayArrow aria-label="Show hidden icons">
        <svg width="8" height="5" viewBox="0 0 8 5"><path d="M0 5l4-4.500L8 5z" fill="#e8f2f2" /></svg>
      </TrayArrow>
      <button aria-label="Action center">
        <svg width="16" height="16" viewBox="0 0 16 16">
          <path d="M2 1v14" stroke="#fff" strokeWidth="1.500" />
          <path d="M3 2h4l1 1.500h5V9H8L7 8H3z" fill="#fff" />
          <RedX />
        </svg>
      </button>
      <button aria-label="Network">
        <svg width="16" height="16" viewBox="0 0 16 16">
          <path d="M5.500 3.500h9v7h-9zM10 11v2.500M7 14h6M2.500 7v6h4M1 1.500h3V6H1z" fill="none" stroke="#fff" strokeWidth="1.200" />
        </svg>
      </button>
      <button aria-label="Volume">
        <svg width="16" height="16" viewBox="0 0 16 16">
          <path d="M1 5h3l4-4v14l-4-4H1z" fill="#fff" />
          <RedX />
        </svg>
      </button>
      <Clock>
        <span>4:50 PM</span>
        <span>12/8/2024</span>
      </Clock>
    </Tray>
  </Bar>
);

const Pointer = styled.svg`
  position: absolute;
  top: 177px;
  left: 900px;
`;

const App = () => (
  <>
    <GlobalStyle />
    <Desktop>
      <BrowserWindow />
      <PowerOptions />
      <WebsiteDialog />
      <InactiveExplorer />
      <Explorer />
      <Taskbar />
      <Pointer width="12" height="20" viewBox="0 0 12 20" aria-hidden="true">
        <path d="M.5.800v15.200l3.500-3.300 2.500 6 2.500-1-2.500-5.700h4.800z" fill="#fff" stroke="#111" />
      </Pointer>
    </Desktop>
  </>
);

export default App;
